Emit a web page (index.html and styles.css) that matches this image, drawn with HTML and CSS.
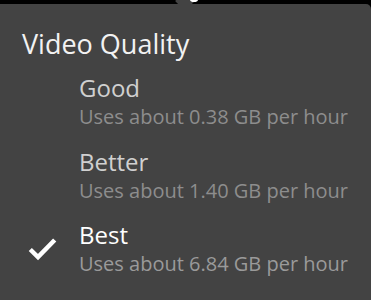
FILE: index.html
```html
<!DOCTYPE html>
<html>
<head>
<meta charset="utf-8">
<link rel="stylesheet" href="styles.css">
</head>
<body>
<div class="top">
  <span class="notch"></span>
  <span class="glint"></span>
</div>
<div class="panel">
  <h1 class="title">Video Quality</h1>
  <ul class="options">
    <li class="option">
      <span class="check"></span>
      <div class="text">
        <div class="name">Good</div>
        <div class="sub">Uses about 0.38 GB per hour</div>
      </div>
    </li>
    <li class="option">
      <span class="check"></span>
      <div class="text">
        <div class="name">Better</div>
        <div class="sub">Uses about 1.40 GB per hour</div>
      </div>
    </li>
    <li class="option selected">
      <span class="check">
        <svg width="29" height="24" viewBox="0 0 29 24"><path d="M2.3 12.5 L10 20 L26.7 3" fill="none" stroke="#fff" stroke-width="4.5" stroke-linecap="butt" stroke-linejoin="miter"/></svg>
      </span>
      <div class="text">
        <div class="name">Best</div>
        <div class="sub">Uses about 6.84 GB per hour</div>
      </div>
    </li>
  </ul>
</div>
</body>
</html>
```
FILE: styles.css
```css
html, body {
  margin: 0;
  padding: 0;
  background: #000;
}
body {
  width: 371px;
  height: 300px;
  overflow: hidden;
  font-family: "Open Sans", "Noto Sans", sans-serif;
}
.top {
  height: 4px;
  position: relative;
}
.notch {
  position: absolute;
  left: 178px;
  top: -6px;
  width: 14px;
  height: 14px;
  background: #434343;
  transform: rotate(45deg);
}
.glint {
  position: absolute;
  left: 190px;
  top: -3px;
  width: 8px;
  height: 5px;
  border-radius: 50%;
  background: #fff;
}
.panel {
  position: relative;
  background: #434343;
  height: 296px;
  border-top-right-radius: 5px;
  padding: 24px 0 0 22px;
  box-sizing: border-box;
}
.title {
  margin: 0;
  font-size: 27px;
  line-height: 32px;
  font-weight: 500;
  color: #f2f2f2;
}
.options {
  list-style: none;
  margin: 14px 0 0 0;
  padding: 0;
  display: flex;
  flex-direction: column;
  gap: 18.5px;
}
.option {
  display: flex;
  align-items: flex-start;
}
.check {
  width: 57px;
  flex: none;
  display: flex;
  padding-top: 16px;
  padding-left: 5.5px;
  box-sizing: border-box;
}
.name {
  font-size: 24px;
  line-height: 28px;
  font-weight: 500;
  color: #d0d0d0;
}
.sub {
  font-size: 20px;
  line-height: 24px;
  font-weight: 500;
  color: #8d8d8d;
  margin-top: 3px;
}
.selected .name {
  color: #fff;
}
.selected .sub {
  color: #9a9a9a;
}
```
